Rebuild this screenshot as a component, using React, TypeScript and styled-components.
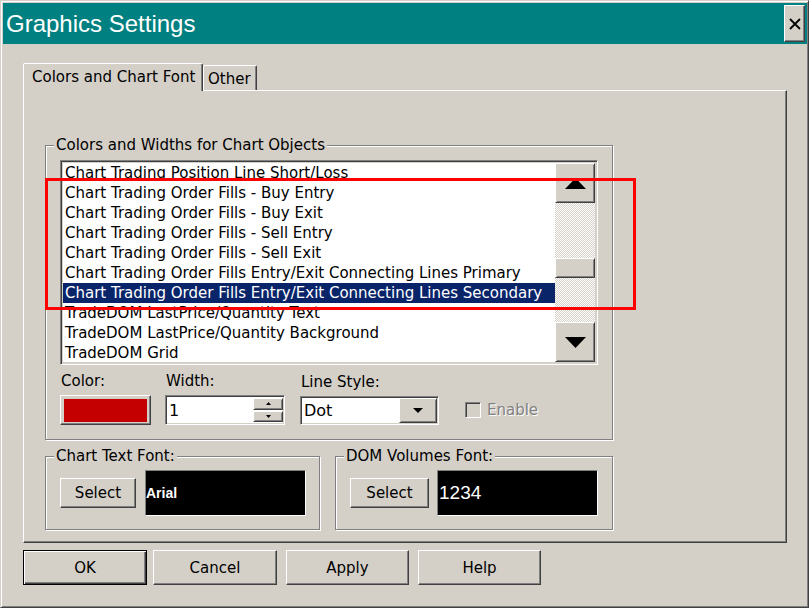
import React from 'react';
import styled, { createGlobalStyle } from 'styled-components';

const FACE = '#d4d0c8';
const UI_FONT = '"DejaVu Sans", Verdana, sans-serif';

const GlobalStyle = createGlobalStyle`
  html, body { margin: 0; padding: 0; background: ${FACE}; }
  body { font-family: ${UI_FONT}; font-size: 15px; color: #000; }
  * { box-sizing: border-box; }
`;

const Window = styled.div`
  position: relative;
  width: 809px;
  height: 608px;
  display: flex;
  flex-direction: column;
  background: ${FACE};
  border: 1px solid;
  border-color: ${FACE} #404040 #404040 ${FACE};
  box-shadow: inset 1px 1px #fff, inset -1px -1px #808080;
  padding: 2px 1px 1px 2px;
`;

const TitleBar = styled.div`
  height: 41px;
  flex: none;
  display: flex;
  align-items: center;
  justify-content: space-between;
  background: #008080;
  padding: 0 2px 0 3px;
`;

const Title = styled.span`
  font-family: "Liberation Sans", Arial, sans-serif;
  font-size: 24px;
  line-height: 28px;
  color: #fff;
`;

const CloseButton = styled.button`
  width: 21px;
  height: 37px;
  padding: 0;
  margin: 0;
  background: ${FACE};
  border: 1px solid;
  border-color: #fff #404040 #404040 #fff;
  box-shadow: inset -1px -1px #808080;
  display: flex;
  align-items: center;
  justify-content: center;
`;

const Content = styled.div`
  display: flex;
  flex-direction: column;
  padding: 19px 0 0 20px;
`;

const TabStrip = styled.div`
  display: flex;
  align-items: flex-end;
  height: 27px;
`;

const Tab = styled.div<{ $active?: boolean; $width: number }>`
  position: relative;
  z-index: ${p => (p.$active ? 1 : 0)};
  width: ${p => p.$width}px;
  height: ${p => (p.$active ? 28 : 25)}px;
  margin-bottom: ${p => (p.$active ? -1 : 0)}px;
  background: ${FACE};
  border: 1px solid;
  border-bottom: none;
  border-color: #fff #404040 transparent #fff;
  border-radius: 2px 2px 0 0;
  box-shadow: inset -1px 0 #808080;
  padding: 4px 0 0 ${p => (p.$active ? 8 : 4)}px;
  font-size: 15px;
  line-height: 18px;
  white-space: nowrap;
`;

const Panel = styled.div`
  width: 764px;
  height: 453px;
  border: 1px solid;
  border-color: #fff #404040 #404040 #fff;
  box-shadow: inset -1px -1px #808080;
  padding: 54px 0 0 21px;
  display: flex;
  flex-direction: column;
`;

const Group = styled.div<{ $width: number; $height: number }>`
  position: relative;
  width: ${p => p.$width}px;
  height: ${p => p.$height}px;
  border: 1px solid #808080;
  box-shadow: inset 1px 1px #fff, 1px 1px #fff;
`;

const Legend = styled.span`
  position: absolute;
  top: -10px;
  left: 8px;
  padding: 0 2px;
  background: ${FACE};
  font-size: 15px;
  line-height: 18px;
  white-space: nowrap;
`;

const ObjectsBody = styled.div`
  display: flex;
  flex-direction: column;
  padding: 14px 14px 0 14px;
`;

const ListBox = styled.div`
  width: 538px;
  height: 205px;
  display: flex;
  border: 1px solid;
  border-color: #808080 #fff #fff #808080;
  box-shadow: inset 1px 1px #404040, inset -1px -1px ${FACE};
  padding: 2px;
`;

const Rows = styled.div`
  flex: 1;
  overflow: hidden;
  background: #fff;
  display: flex;
  flex-direction: column;
`;

const Row = styled.div<{ $selected?: boolean }>`
  flex: none;
  height: 20px;
  line-height: 20px;
  padding-left: 2px;
  font-size: 15px;
  white-space: nowrap;
  background: ${p => (p.$selected ? '#0a246a' : 'transparent')};
  color: ${p => (p.$selected ? '#fff' : '#000')};
`;

const ScrollBar = styled.div`
  width: 40px;
  display: flex;
  flex-direction: column;
`;

const RaisedBox = styled.div<{ $w?: number; $h: number }>`
  flex: none;
  width: ${p => (p.$w ? `${p.$w}px` : 'auto')};
  height: ${p => p.$h}px;
  background: ${FACE};
  border: 1px solid;
  border-color: #fff #404040 #404040 #fff;
  box-shadow: inset 1px 1px ${FACE}, inset -1px -1px #808080;
  display: flex;
  align-items: center;
  justify-content: center;
`;

const Track = styled.div`
  flex: 1;
  display: flex;
  flex-direction: column;
  background-color: #fff;
  background-image: conic-gradient(${FACE} 25%, #fff 0 50%, ${FACE} 0 75%, #fff 0);
  background-size: 2px 2px;
`;

const Thumb = styled(RaisedBox)<{ $offset: number }>`
  margin-top: ${p => p.$offset}px;
`;

const ControlsRow = styled.div`
  display: flex;
  align-items: flex-end;
  margin-top: 7px;
`;

const Field = styled.div<{ $gap: number }>`
  display: flex;
  flex-direction: column;
  gap: 5px;
  margin-left: ${p => p.$gap}px;
`;

const Label = styled.span`
  font-size: 15px;
  line-height: 18px;
  padding-left: 1px;
`;

const ColorButton = styled.div`
  width: 91px;
  height: 30px;
  background: ${FACE};
  border: 1px solid;
  border-color: #fff #404040 #404040 #fff;
  box-shadow: inset -1px -1px #808080;
  padding: 3px 3px 2px 3px;
`;

const Swatch = styled.div<{ $color: string }>`
  width: 100%;
  height: 100%;
  background: ${p => p.$color};
`;

const Sunken = styled.div<{ $w: number; $h: number; $bg?: string }>`
  width: ${p => p.$w}px;
  height: ${p => p.$h}px;
  display: flex;
  align-items: stretch;
  background: ${p => p.$bg || '#fff'};
  border: 1px solid;
  border-color: #808080 #fff #fff #808080;
  box-shadow: inset 1px 1px #404040, inset -1px -1px ${FACE};
  padding: 1px 1px 1px 1px;
`;

const FieldText = styled.span`
  flex: 1;
  display: flex;
  align-items: center;
  padding-left: 2px;
  font-size: 16px;
`;

const SpinColumn = styled.div`
  width: 30px;
  display: flex;
  flex-direction: column;
  gap: 1px;
  padding: 1px 0;
`;

const SpinButton = styled(RaisedBox)`
  flex: 1;
`;

const CheckField = styled.div`
  display: flex;
  align-items: center;
  gap: 6px;
  height: 30px;
  margin-left: 26px;
`;

const CheckBox = styled.div`
  width: 16px;
  height: 16px;
  background: ${FACE};
  border: 1px solid;
  border-color: #808080 #fff #fff #808080;
  box-shadow: inset 1px 1px #404040, inset -1px -1px ${FACE};
`;

const DisabledText = styled.span`
  color: #808080;
  text-shadow: 1px 1px #fff;
  font-size: 15px;
`;

const FontRow = styled.div`
  display: flex;
  margin-top: 16px;
  gap: 15px;
`;

const FontBody = styled.div`
  height: 100%;
  display: flex;
  align-items: center;
  padding: 0 0 0 14px;
`;

const PushButton = styled.button<{ $w: number; $h: number; $default?: boolean; $gap?: number }>`
  width: ${p => p.$w}px;
  height: ${p => p.$h}px;
  margin: 0 0 0 ${p => p.$gap || 0}px;
  padding: 0;
  font-family: ${UI_FONT};
  font-size: 15px;
  color: #000;
  background: ${FACE};
  border: 1px solid;
  border-color: ${p => (p.$default ? '#000' : '#fff #404040 #404040 #fff')};
  box-shadow: ${p =>
    p.$default
      ? 'inset 1px 1px #fff, inset -1px -1px #404040, inset -2px -2px #808080'
      : 'inset -1px -1px #808080'};
`;

const FontPreview = styled.div<{ $w: number; $gap: number }>`
  width: ${p => p.$w}px;
  height: 46px;
  margin-left: ${p => p.$gap}px;
  background: #000;
  border: 1px solid;
  border-color: #808080 #fff #fff #808080;
  display: flex;
  align-items: center;
  color: #fff;
  font-family: "Liberation Sans", Arial, sans-serif;
`;

const PreviewText = styled.span<{ $size: number; $bold?: boolean }>`
  font-size: ${p => p.$size}px;
  font-weight: ${p => (p.$bold ? 700 : 400)};
  padding-left: ${p => (p.$bold ? 0 : 1)}px;
`;

const ButtonRow = styled.div`
  display: flex;
  margin-top: 7px;
`;

const Annotation = styled.div`
  position: absolute;
  left: 44px;
  top: 177px;
  width: 591px;
  height: 132px;
  border: 3px solid #ff0000;
  pointer-events: none;
`;

const Arrow = ({ w, h, up }: { w: number; h: number; up?: boolean }) => (
  <svg width={w} height={h} viewBox={`0 0 ${w} ${h}`} style={{ display: 'block' }}>
    <polygon
      points={up ? `0,${h} ${w},${h} ${w / 2},0` : `0,0 ${w},0 ${w / 2},${h}`}
      fill="#000"
    />
  </svg>
);

const CloseGlyph = () => (
  <svg width="12" height="12" viewBox="0 0 12 12" style={{ display: 'block' }}>
    <path d="M1 1 L11 11 M11 1 L1 11" stroke="#000" strokeWidth="1.8" />
  </svg>
);

const items = [
  'Chart Trading Position Line Short/Loss',
  'Chart Trading Order Fills - Buy Entry',
  'Chart Trading Order Fills - Buy Exit',
  'Chart Trading Order Fills - Sell Entry',
  'Chart Trading Order Fills - Sell Exit',
  'Chart Trading Order Fills Entry/Exit Connecting Lines Primary',
  'Chart Trading Order Fills Entry/Exit Connecting Lines Secondary',
  'TradeDOM LastPrice/Quantity Text',
  'TradeDOM LastPrice/Quantity Background',
  'TradeDOM Grid',
];

const SELECTED = 6;

export default function App() {
  return (
    <>
      <GlobalStyle />
      <Window>
        <TitleBar>
          <Title>Graphics Settings</Title>
          <CloseButton aria-label="Close">
            <CloseGlyph />
          </CloseButton>
        </TitleBar>
        <Content>
          <TabStrip>
            <Tab $active $width={180}>Colors and Chart Font</Tab>
            <Tab $width={54}>Other</Tab>
          </TabStrip>
          <Panel>
            <Group $width={568} $height={295}>
              <Legend>Colors and Widths for Chart Objects</Legend>
              <ObjectsBody>
                <ListBox>
                  <Rows>
                    {items.map((t, i) => (
                      <Row key={t} $selected={i === SELECTED}>
                        {t}
                      </Row>
                    ))}
                  </Rows>
                  <ScrollBar>
                    <RaisedBox $h={40}>
                      <Arrow w={21} h={11} up />
                    </RaisedBox>
                    <Track>
                      <Thumb $h={20} $offset={55} />
                    </Track>
                    <RaisedBox $h={40}>
                      <Arrow w={21} h={11} />
                    </RaisedBox>
                  </ScrollBar>
                </ListBox>
                <ControlsRow>
                  <Field $gap={0}>
                    <Label>Color:</Label>
                    <ColorButton>
                      <Swatch $color="#c40000" />
                    </ColorButton>
                  </Field>
                  <Field $gap={14}>
                    <Label>Width:</Label>
                    <Sunken $w={120} $h={30}>
                      <FieldText>1</FieldText>
                      <SpinColumn>
                        <SpinButton $h={12}>
                          <Arrow w={5} h={3} up />
                        </SpinButton>
                        <SpinButton $h={12}>
                          <Arrow w={5} h={3} />
                        </SpinButton>
                      </SpinColumn>
                    </Sunken>
                  </Field>
                  <Field $gap={15}>
                    <Label>Line Style:</Label>
                    <Sunken $w={139} $h={29}>
                      <FieldText>Dot</FieldText>
                      <RaisedBox $w={38} $h={25}>
                        <Arrow w={10} h={5} />
                      </RaisedBox>
                    </Sunken>
                  </Field>
                  <CheckField>
                    <CheckBox />
                    <DisabledText>Enable</DisabledText>
                  </CheckField>
                </ControlsRow>
              </ObjectsBody>
            </Group>
            <FontRow>
              <Group $width={275} $height={74}>
                <Legend>Chart Text Font:</Legend>
                <FontBody>
                  <PushButton $w={76} $h={30}>Select</PushButton>
                  <FontPreview $w={161} $gap={9}>
                    <PreviewText $size={14} $bold>Arial</PreviewText>
                  </FontPreview>
                </FontBody>
              </Group>
              <Group $width={278} $height={74}>
                <Legend>DOM Volumes Font:</Legend>
                <FontBody>
                  <PushButton $w={79} $h={30}>Select</PushButton>
                  <FontPreview $w={161} $gap={8}>
                    <PreviewText $size={19}>1234</PreviewText>
                  </FontPreview>
                </FontBody>
              </Group>
            </FontRow>
          </Panel>
          <ButtonRow>
            <PushButton $w={124} $h={35} $default>OK</PushButton>
            <PushButton $w={124} $h={35} $gap={6}>Cancel</PushButton>
            <PushButton $w={123} $h={35} $gap={9}>Apply</PushButton>
            <PushButton $w={123} $h={35} $gap={9}>Help</PushButton>
          </ButtonRow>
        </Content>
        <Annotation />
      </Window>
    </>
  );
}
